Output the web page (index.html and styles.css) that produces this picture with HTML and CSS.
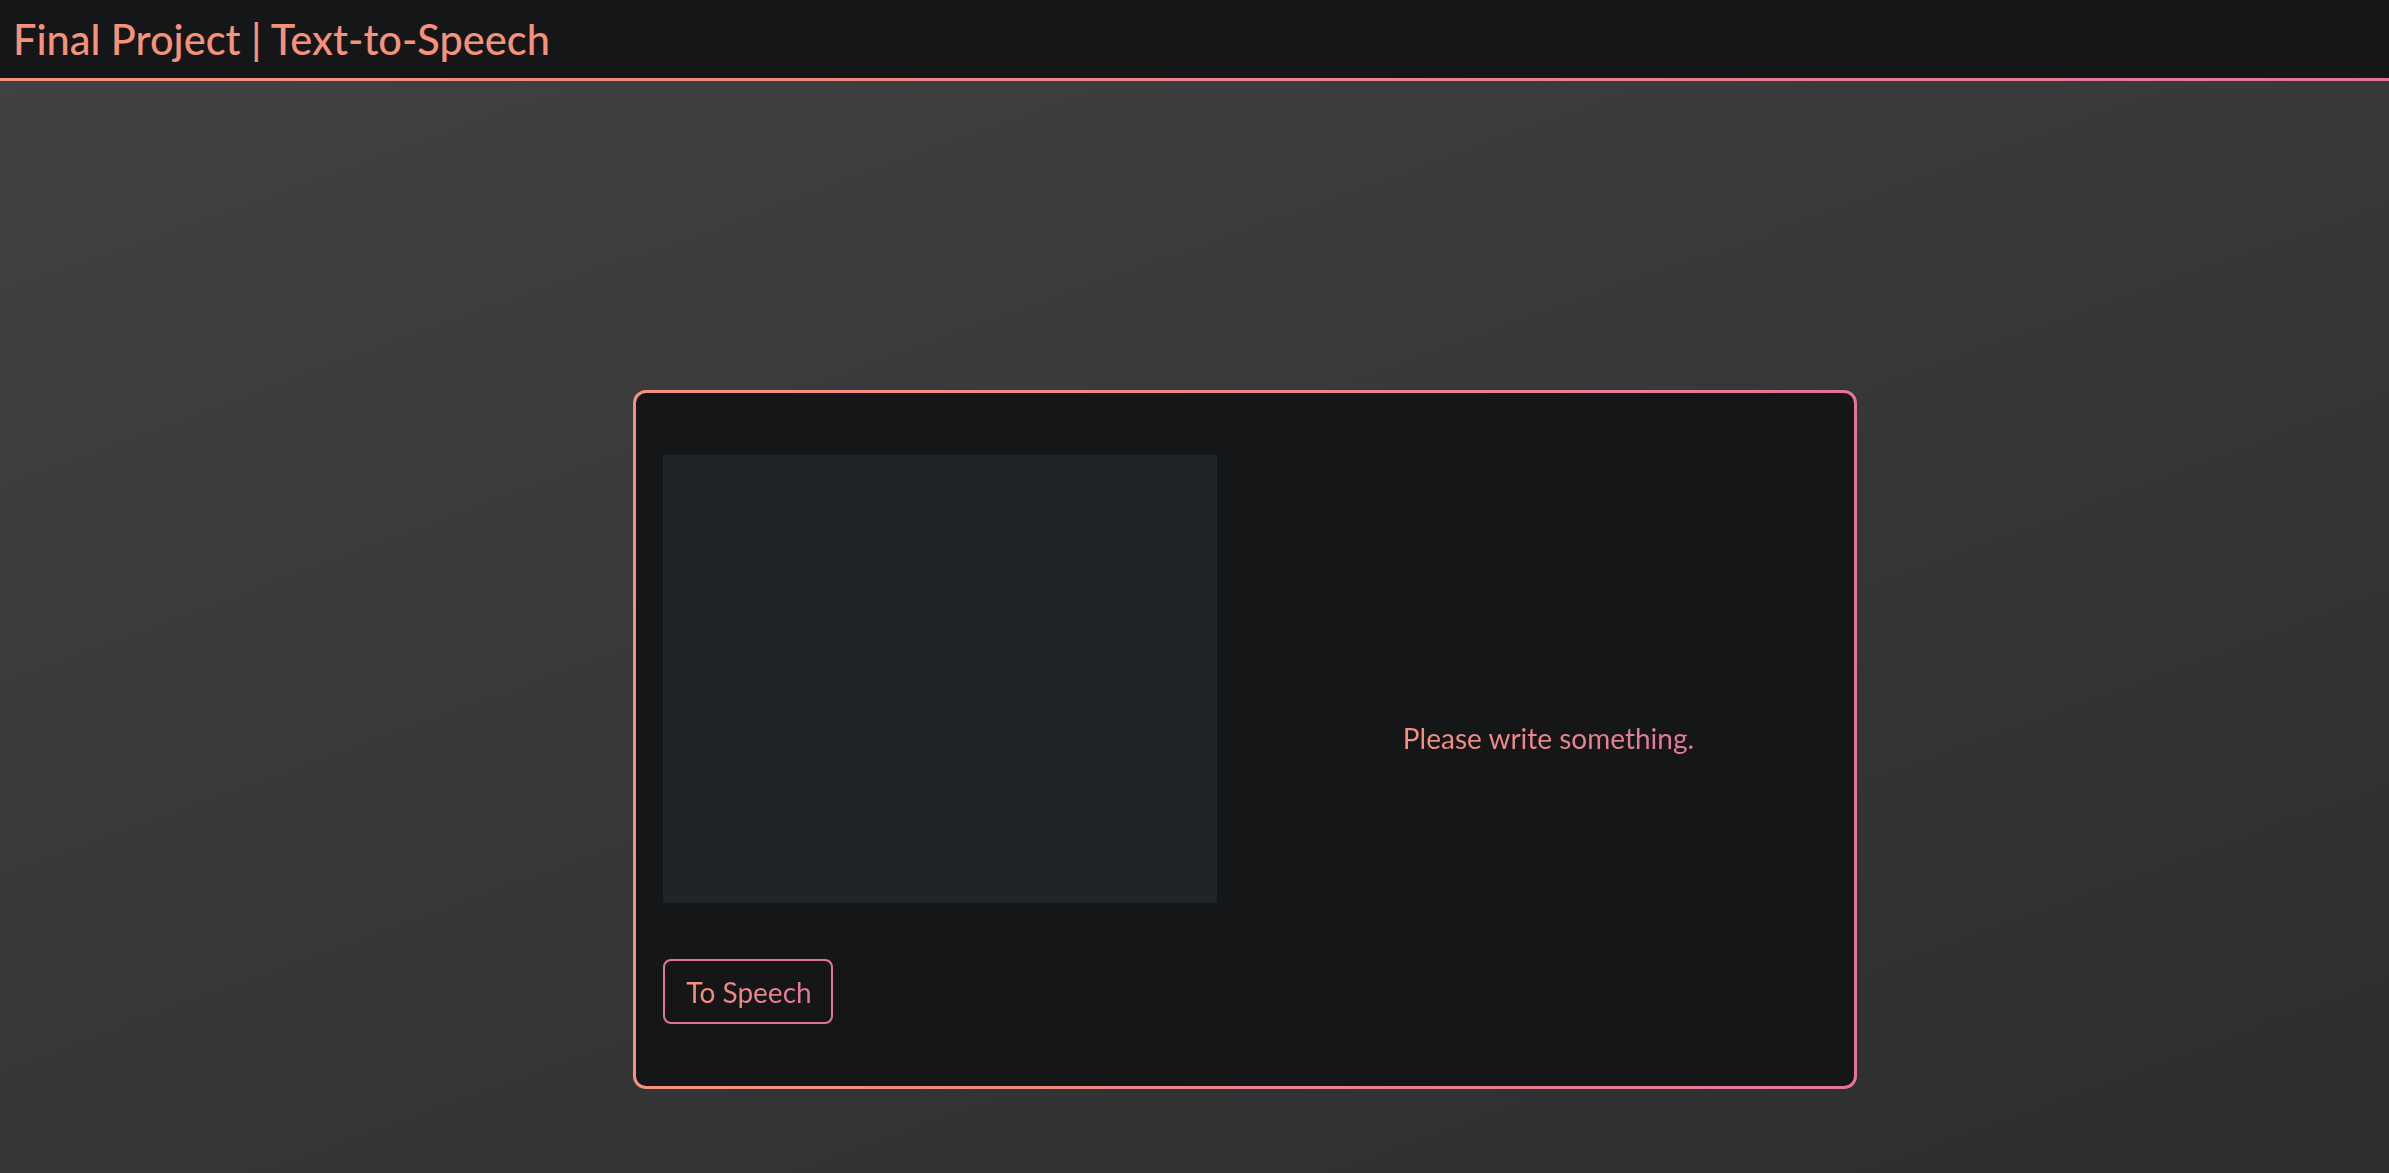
FILE: index.html
```html
<!DOCTYPE html>
<html lang="en">
<head>
<meta charset="utf-8">
<title>Final Project | Text-to-Speech</title>
<link rel="stylesheet" href="styles.css">
</head>
<body>
<header class="topbar">
  <h1 class="title">Final Project | Text-to-Speech</h1>
</header>
<main class="stage">
  <section class="card">
    <div class="input-col">
      <textarea class="text-input"></textarea>
      <button class="speak-btn" type="button"><span class="grad-text">To Speech</span></button>
    </div>
    <div class="output-col">
      <p class="output grad-text">Please write something.</p>
    </div>
  </section>
</main>
</body>
</html>
```

FILE: styles.css
```css
* { box-sizing: border-box; }

html, body {
  margin: 0;
  padding: 0;
  height: 100%;
}

body {
  font-family: Lato, "Noto Sans", sans-serif;
  background: linear-gradient(160deg, #404244 0%, #2b2d2f 100%);
  min-height: 100vh;
  overflow: hidden;
}

.topbar {
  height: 81px;
  background: #151618;
  border-bottom: 3px solid transparent;
  border-image: linear-gradient(90deg, #f8917a, #e77498) 1;
  display: flex;
  align-items: center;
  padding-left: 13px;
}

.title {
  margin: 0;
  font-size: 41.5px;
  font-weight: 500;
  color: #f7917a;
  line-height: 1;
  padding-top: 2px;
}

.stage {
  padding-top: 309px;
  padding-left: 633px;
}

.card {
  width: 1224px;
  height: 699px;
  border: 3px solid transparent;
  border-radius: 13px;
  background:
    linear-gradient(#151618, #151618) padding-box,
    linear-gradient(90deg, #f8917a, #e77498) border-box;
  padding: 62px 0 62px 27px;
  display: grid;
  grid-template-columns: 554px 1fr;
  column-gap: 26px;
}

.input-col {
  display: flex;
  flex-direction: column;
  gap: 56px;
}

.text-input {
  width: 554px;
  height: 448px;
  background: #212426;
  border: none;
  resize: none;
  outline: none;
  display: block;
}

.speak-btn {
  width: 170px;
  height: 65px;
  background: transparent;
  border: 2px solid #e0759a;
  border-radius: 8px;
  font-family: Lato, "Noto Sans", sans-serif;
  font-size: 28px;
  padding: 0 0 0 2px;
  cursor: pointer;
}

.grad-text {
  background: linear-gradient(90deg, #f6917a, #e2789c);
  -webkit-background-clip: text;
  background-clip: text;
  color: transparent;
}

.output-col {
  display: flex;
  align-items: center;
  justify-content: center;
}

.output {
  margin: 0;
  font-size: 28px;
  padding-bottom: 3px;
}
```
